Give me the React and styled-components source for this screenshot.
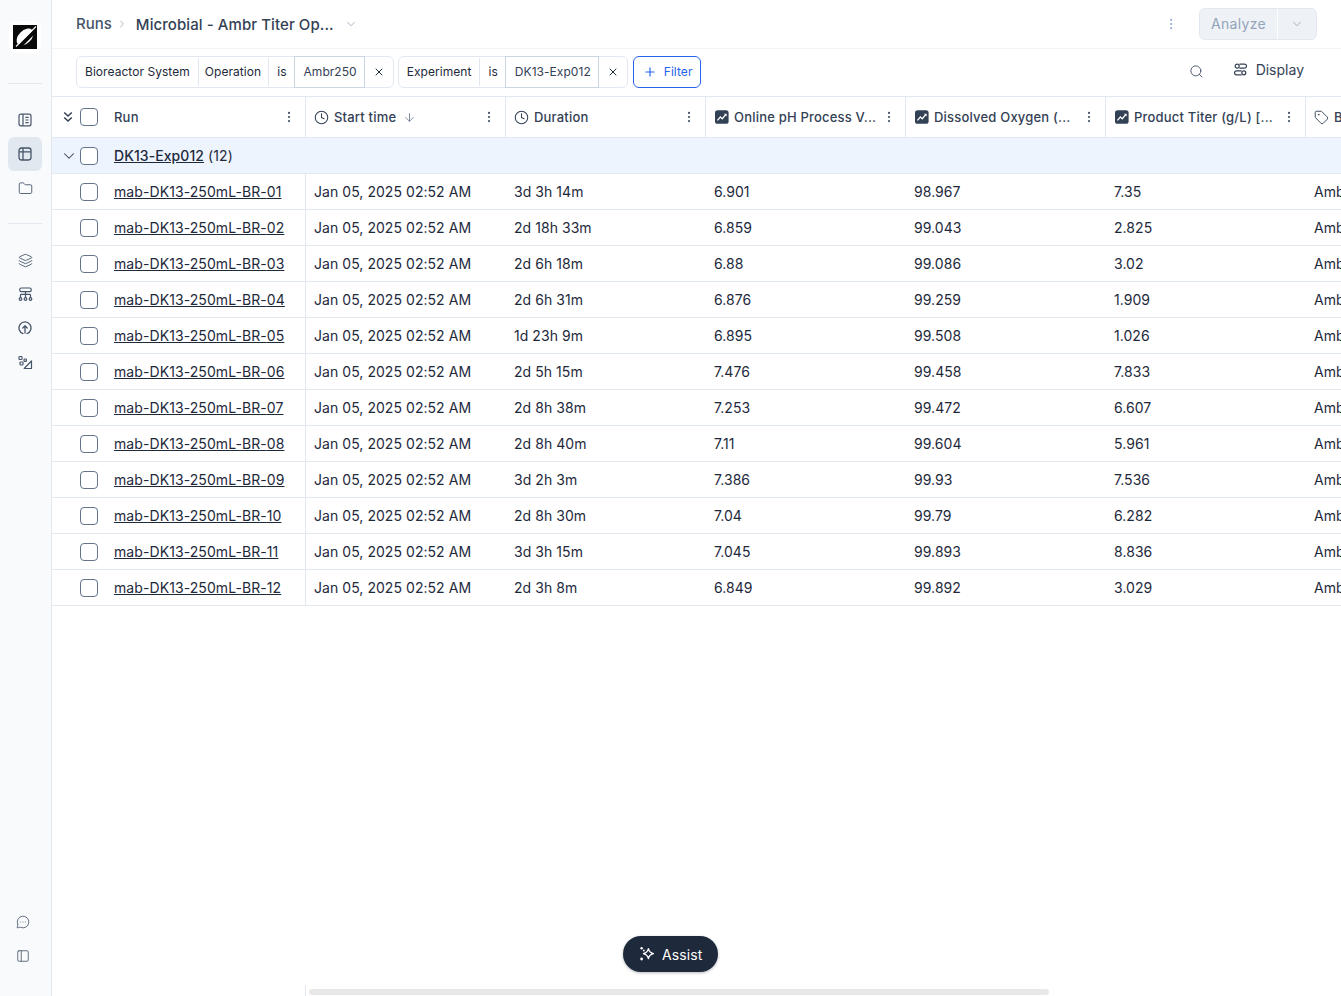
import React from "react";
import styled, { createGlobalStyle } from "styled-components";
import {
  ArrowDown,
  ChevronDown,
  ChevronRight,
  Clock,
  EllipsisVertical,
  Folder,
  Layers,
  MessageCircleMore,
  PanelLeft,
  Plus,
  Search,
  Tag,
  X,
} from "lucide-react";

const RUNS = [
  ["01", "3d 3h 14m", "6.901", "98.967", "7.35"],
  ["02", "2d 18h 33m", "6.859", "99.043", "2.825"],
  ["03", "2d 6h 18m", "6.88", "99.086", "3.02"],
  ["04", "2d 6h 31m", "6.876", "99.259", "1.909"],
  ["05", "1d 23h 9m", "6.895", "99.508", "1.026"],
  ["06", "2d 5h 15m", "7.476", "99.458", "7.833"],
  ["07", "2d 8h 38m", "7.253", "99.472", "6.607"],
  ["08", "2d 8h 40m", "7.11", "99.604", "5.961"],
  ["09", "3d 2h 3m", "7.386", "99.93", "7.536"],
  ["10", "2d 8h 30m", "7.04", "99.79", "6.282"],
  ["11", "3d 3h 15m", "7.045", "99.893", "8.836"],
  ["12", "2d 3h 8m", "6.849", "99.892", "3.029"],
];

const Logo = () => (
  <svg width="24" height="24" viewBox="0 0 24 24">
    <path d="M0 0h24v24H0z" fill="#0a0a0a" />
    <ellipse cx="12" cy="12" rx="10" ry="6.4" transform="rotate(-45 12 12)" fill="#fff" />
    <path d="M25 3 4 24" stroke="#0a0a0a" strokeWidth="4" />
    <path d="M23 1.500 3 21.500" stroke="#fff" strokeWidth="1.100" />
  </svg>
);

const NotebookIcon = () => (
  <svg width="14" height="14" viewBox="0 0 14 14" fill="none" stroke="currentColor" strokeWidth="1.2">
    <rect x="1" y="1.2" width="12" height="11.6" rx="2" />
    <path d="M5 1.2v11.6M7.4 4.4h3.2M7.4 7h3.2M7.4 9.6h3.2" />
  </svg>
);

const TableIcon = () => (
  <svg width="14" height="14" viewBox="0 0 14 14" fill="none" stroke="currentColor" strokeWidth="1.3">
    <rect x="1" y="1" width="12" height="12" rx="2.4" />
    <path d="M1 4.8h12M5 1v12" />
  </svg>
);

const TreeIcon = () => (
  <svg width="15" height="15" viewBox="0 0 15 15" fill="none" stroke="currentColor" strokeWidth="1.2">
    <rect x="1.8" y="1" width="11.4" height="3.6" rx="1.4" />
    <path d="M7.5 4.6v6M2.5 10.6V8.2a.8.8 0 0 1 .8-.8h8.4a.8.8 0 0 1 .8.8v2.4" />
    <circle cx="2.5" cy="12" r="1.3" />
    <circle cx="7.5" cy="12" r="1.3" />
    <circle cx="12.5" cy="12" r="1.3" />
  </svg>
);

const UploadIcon = () => (
  <svg width="14" height="14" viewBox="0 0 14 14" fill="none" stroke="currentColor" strokeWidth="1.3">
    <path d="M5 12.6A6 6 0 1 1 9 12.6" strokeLinecap="round" />
    <path d="M7 12V5M4.8 7 7 4.8 9.2 7" strokeLinecap="round" strokeLinejoin="round" />
  </svg>
);

const ShapesIcon = () => (
  <svg width="15" height="15" viewBox="0 0 15 15" fill="none" stroke="currentColor" strokeWidth="1.2">
    <rect x="1" y="1.5" width="3" height="3" rx="0.8" />
    <rect x="2" y="7" width="3" height="3" rx="0.8" />
    <rect x="6" y="4" width="2.4" height="2.4" rx="0.7" />
    <path d="M13.5 6v7.5H6.2z" strokeLinejoin="round" />
  </svg>
);

const ChartIcon = () => (
  <svg width="15" height="14" viewBox="-1 0 15 14">
    <rect x="0" y="0.2" width="13.6" height="13.6" rx="2.6" fill="#334155" />
    <path d="M2.4 10.4 5.4 7l1.9 1.7 3.6-4.4" fill="none" stroke="#fff" strokeWidth="1.3" />
    <path d="M8.8 3.8h2.8v2.8z" fill="#fff" />
  </svg>
);

const SparkIcon = () => (
  <svg width="16" height="16" viewBox="0 0 16 16" fill="none" stroke="#fff" strokeWidth="1.3">
    <path d="M9.400 2.600c.6 3 1.800 4.200 5 5-3.200.8-4.400 2-5 5-.6-3-1.800-4.200-5-5 3.200-.8 4.400-2 5-5z" strokeLinejoin="round" />
    <circle cx="2.600" cy="2.300" r="1.200" fill="#fff" stroke="none" />
    <circle cx="4.800" cy="4.500" r="0.900" fill="#fff" stroke="none" />
    <circle cx="2.600" cy="13" r="1.400" fill="#fff" stroke="none" />
  </svg>
);

const DoubleChevron = () => (
  <svg width="10" height="12" viewBox="0 0 10 12" fill="none" stroke="currentColor" strokeWidth="1.5">
    <path d="M1.200 1.500 5 5l3.800-3.500M1.200 6.500 5 10l3.800-3.500" />
  </svg>
);

const DisplayIcon = () => (
  <svg width="13" height="13" viewBox="0 0 13 13" fill="none" stroke="currentColor" strokeWidth="1.2">
    <path d="M5.400 1.200h5.100a2 2 0 0 1 0 4H5.400" />
    <circle cx="3.200" cy="3.200" r="2" />
    <path d="M7.600 7.800H2.500a2 2 0 0 0 0 4h5.100" />
    <circle cx="9.800" cy="9.800" r="2" />
  </svg>
);

const App = () => (
  <>
    <GlobalStyle />
    <Shell>
      <Sidebar>
        <LogoBox>
          <Logo />
        </LogoBox>
        <NavRule />
        <NavGroup>
          <NavItem><NotebookIcon /></NavItem>
          <NavItem $active><TableIcon /></NavItem>
          <NavItem><Folder size={15} strokeWidth={1.4} /></NavItem>
        </NavGroup>
        <NavRule $second />
        <NavGroup>
          <NavItem><Layers size={15} strokeWidth={1.4} /></NavItem>
          <NavItem><TreeIcon /></NavItem>
          <NavItem><UploadIcon /></NavItem>
          <NavItem><ShapesIcon /></NavItem>
        </NavGroup>
        <NavFoot>
          <NavItem><MessageCircleMore size={14} strokeWidth={1.4} /></NavItem>
          <NavItem><PanelLeft size={14} strokeWidth={1.4} /></NavItem>
        </NavFoot>
      </Sidebar>

      <Main>
        <TopBar>
          <Crumb>Runs</Crumb>
          <CrumbSep><ChevronRight size={12} strokeWidth={1.5} /></CrumbSep>
          <Title>Microbial - Ambr Titer Op...</Title>
          <TitleCaret><ChevronDown size={14} strokeWidth={1.4} /></TitleCaret>
          <TopActions>
            <MoreDots><EllipsisVertical size={14} strokeWidth={1.5} /></MoreDots>
            <AnalyzeButton>
              <AnalyzeLabel>Analyze</AnalyzeLabel>
              <AnalyzeCaret><ChevronDown size={14} strokeWidth={1.4} /></AnalyzeCaret>
            </AnalyzeButton>
          </TopActions>
        </TopBar>

        <FilterBar>
          <FilterChip>
            <ChipPart>Bioreactor System</ChipPart>
            <ChipPart>Operation</ChipPart>
            <ChipPart $last>is</ChipPart>
            <ChipValue>Ambr250</ChipValue>
            <ChipClose><X size={12} strokeWidth={2} /></ChipClose>
          </FilterChip>
          <FilterChip>
            <ChipPart>Experiment</ChipPart>
            <ChipPart $last>is</ChipPart>
            <ChipValue>DK13-Exp012</ChipValue>
            <ChipClose><X size={12} strokeWidth={2} /></ChipClose>
          </FilterChip>
          <AddFilter>
            <Plus size={14} strokeWidth={2} />
            <FilterLabel>Filter</FilterLabel>
          </AddFilter>
          <FilterTools>
            <SearchButton><Search size={15} strokeWidth={1.5} /></SearchButton>
            <DisplayButton>
              <DisplayIcon />
              Display
            </DisplayButton>
          </FilterTools>
        </FilterBar>

        <TableArea>
          <HeadRow>
            <RunHead>
              <Toggle><DoubleChevron /></Toggle>
              <CheckBox />
              <HeadLabel>Run</HeadLabel>
              <HeadMenu><EllipsisVertical size={14} strokeWidth={1.8} /></HeadMenu>
            </RunHead>
            <HeadCell>
              <Clock size={15} strokeWidth={1.7} />
              <HeadLabel>Start time</HeadLabel>
              <SortMark><ArrowDown size={13} strokeWidth={1.5} /></SortMark>
              <HeadMenu><EllipsisVertical size={14} strokeWidth={1.8} /></HeadMenu>
            </HeadCell>
            <HeadCell>
              <Clock size={15} strokeWidth={1.7} />
              <HeadLabel>Duration</HeadLabel>
              <HeadMenu><EllipsisVertical size={14} strokeWidth={1.8} /></HeadMenu>
            </HeadCell>
            <HeadCell>
              <ChartIcon />
              <HeadLabel>Online pH Process V...</HeadLabel>
              <HeadMenu><EllipsisVertical size={14} strokeWidth={1.8} /></HeadMenu>
            </HeadCell>
            <HeadCell>
              <ChartIcon />
              <HeadLabel>Dissolved Oxygen (...</HeadLabel>
              <HeadMenu><EllipsisVertical size={14} strokeWidth={1.8} /></HeadMenu>
            </HeadCell>
            <HeadCell>
              <ChartIcon />
              <HeadLabel>Product Titer (g/L) [...</HeadLabel>
              <HeadMenu><EllipsisVertical size={14} strokeWidth={1.8} /></HeadMenu>
            </HeadCell>
            <HeadCell>
              <Tag size={15} strokeWidth={1.5} />
              <HeadLabel>Bioreactor System</HeadLabel>
            </HeadCell>
          </HeadRow>

          <GroupRow>
            <GroupToggle><ChevronDown size={18} strokeWidth={1.4} /></GroupToggle>
            <CheckBox />
            <GroupName>DK13-Exp012</GroupName>
            <GroupCount>(12)</GroupCount>
          </GroupRow>

          {RUNS.map(([num, duration, ph, oxygen, titer]) => (
            <DataRow key={num}>
              <RunCell>
                <CheckBox />
                <RunLink>mab-DK13-250mL-BR-{num}</RunLink>
              </RunCell>
              <Cell>Jan 05, 2025 02:52 AM</Cell>
              <Cell>{duration}</Cell>
              <Cell>{ph}</Cell>
              <Cell>{oxygen}</Cell>
              <Cell>{titer}</Cell>
              <Cell>Ambr250</Cell>
            </DataRow>
          ))}

          <ScrollLine />
          <ScrollThumb />
        </TableArea>

        <AssistButton>
          <SparkIcon />
          Assist
        </AssistButton>
      </Main>
    </Shell>
  </>
);

const GlobalStyle = createGlobalStyle`
  html, body {
    margin: 0;
    height: 100%;
    background: #fff;
    overflow: hidden;
  }
  body {
    font-family: Inter, "Liberation Sans", sans-serif;
    font-size: 14px;
    color: #1e293b;
  }
  * {
    box-sizing: border-box;
  }
`;

const COLUMNS = "254px repeat(6, 200px)";

const Shell = styled.div`
  display: flex;
  height: 100vh;
`;

const Sidebar = styled.aside`
  flex: 0 0 52px;
  display: flex;
  flex-direction: column;
  align-items: center;
  padding: 21px 1px 23px 0;
  background: #f8fafc;
  border-right: 1px solid #e2e8f0;
  color: #475569;
`;

const LogoBox = styled.div`
  width: 32px;
  height: 32px;
  flex: none;
  display: flex;
  align-items: center;
  justify-content: center;
  background: #fff;
  border-radius: 6px;
`;

const NavRule = styled.div`
  width: 34px;
  height: 1px;
  flex: none;
  background: #e2e8f0;
  margin: ${(p) => (p.$second ? "18px 0 19px" : "30px 0 19px")};
`;

const NavGroup = styled.div`
  display: flex;
  flex-direction: column;
`;

const NavFoot = styled(NavGroup)`
  margin-top: auto;
  margin-right: 5px;
`;

const NavItem = styled.div`
  width: 34px;
  height: 34px;
  display: flex;
  align-items: center;
  justify-content: center;
  border-radius: 6px;
  background: ${(p) => (p.$active ? "#e2e8f0" : "transparent")};
`;

const Main = styled.main`
  flex: 1;
  min-width: 0;
  display: flex;
  flex-direction: column;
  position: relative;
`;

const TopBar = styled.header`
  flex: 0 0 49px;
  display: flex;
  align-items: center;
  padding: 0 24px;
  border-bottom: 1px solid #f1f5f9;
`;

const Crumb = styled.span`
  font-size: 15px;
  font-weight: 500;
  color: #475569;
  margin-bottom: 2px;
`;

const CrumbSep = styled.span`
  display: flex;
  margin: 0 8px 0 4px;
  color: #94a3b8;
`;

const Title = styled.span`
  font-size: 15px;
  font-weight: 500;
  letter-spacing: 0.08px;
  color: #334155;
`;

const TitleCaret = styled.span`
  display: flex;
  margin-left: 10px;
  color: #94a3b8;
`;

const TopActions = styled.div`
  margin-left: auto;
  display: flex;
  align-items: center;
  gap: 21px;
`;

const MoreDots = styled.span`
  display: flex;
  color: #7c9bdc;
`;

const AnalyzeButton = styled.div`
  width: 118px;
  height: 32px;
  display: flex;
  align-items: stretch;
  background: #eef2f7;
  border: 1px solid #e2e8f0;
  border-radius: 6px;
  color: #94a3b8;
`;

const AnalyzeLabel = styled.span`
  width: 78px;
  display: flex;
  align-items: center;
  justify-content: center;
  padding-bottom: 1px;
  letter-spacing: 0.3px;
  border-right: 1px solid #fff;
`;

const AnalyzeCaret = styled.span`
  flex: 1;
  display: flex;
  align-items: center;
  justify-content: center;
`;

const FilterBar = styled.div`
  flex: 0 0 48px;
  display: flex;
  align-items: center;
  gap: 4px;
  padding: 0 24px 1px;
  border-bottom: 1px solid #e2e8f0;
`;

const FilterChip = styled.div`
  height: 32px;
  display: flex;
  align-items: stretch;
  border: 1px solid #e2e8f0;
  border-radius: 6px;
  font-size: 12px;
  letter-spacing: 0.05px;
  color: #1e293b;
`;

const ChipPart = styled.span`
  position: relative;
  display: flex;
  align-items: center;
  padding: 0 ${(p) => (p.$last ? "7px" : "8px")} 1px ${(p) => (p.$last ? "8px" : "6px")};
  &:first-child {
    padding: 0 9px 1px 8px;
  }
  ${(p) =>
    !p.$last &&
    `&::after {
      content: "";
      position: absolute;
      right: 0;
      top: 1px;
      bottom: 1px;
      width: 1px;
      background: #e2e8f0;
    }`}
`;

const ChipValue = styled.span`
  display: flex;
  align-items: center;
  padding: 0 7px 1px 9px;
  border: 1px solid #cbd5e1;
  margin: -1px 0;
  color: #334155;
`;

const ChipClose = styled.span`
  width: 28px;
  display: flex;
  align-items: center;
  justify-content: center;
  color: #1e293b;
`;

const AddFilter = styled.button`
  height: 32px;
  margin-left: 1px;
  display: flex;
  align-items: center;
  gap: 7px;
  padding: 0 8px 0 9px;
  background: #fff;
  border: 1px solid #2563eb;
  border-radius: 6px;
  font: inherit;
  font-size: 12px;
  letter-spacing: 0.05px;
  color: #2563eb;
`;

const FilterLabel = styled.span`
  margin-bottom: 1px;
`;

const FilterTools = styled.div`
  margin-left: auto;
  margin-bottom: 2px;
  display: flex;
  align-items: center;
  gap: 30px;
  padding-right: 13px;
`;

const SearchButton = styled.span`
  display: flex;
  color: #475569;
`;

const DisplayButton = styled.span`
  display: flex;
  align-items: center;
  gap: 9px;
  margin-bottom: 3px;
  color: #334155;
  font-size: 14px;
`;

const TableArea = styled.div`
  flex: 1;
  min-height: 0;
  position: relative;
  overflow: hidden;
`;

const HeadRow = styled.div`
  display: grid;
  grid-template-columns: ${COLUMNS};
  width: max-content;
  height: 41px;
  border-bottom: 1px solid #e2e8f0;
`;

const HeadCell = styled.div`
  display: flex;
  align-items: center;
  gap: 5px;
  padding: 0 8px;
  border-right: 1px solid #e2e8f0;
  color: #334155;
  &:last-child {
    border-right: 0;
  }
`;

const RunHead = styled(HeadCell)`
  gap: 0;
`;

const HeadLabel = styled.span`
  font-size: 13px;
  font-weight: 500;
  letter-spacing: 0.2px;
  white-space: nowrap;
`;

const HeadMenu = styled.span`
  display: flex;
  margin-left: auto;
  margin-right: 1px;
  color: #475569;
`;

const SortMark = styled.span`
  display: flex;
  margin-left: 2px;
  color: #64748b;
`;

const Toggle = styled.span`
  display: flex;
  width: 20px;
  justify-content: center;
  margin-left: -2px;
  color: #334155;
`;

const GroupToggle = styled(Toggle)`
  padding-left: 2px;
`;

const CheckBox = styled.span`
  flex: none;
  width: 18px;
  height: 18px;
  margin: 0 16px 0 2px;
  background: #fff;
  border: 1px solid #64748b;
  border-radius: 4px;
`;

const GroupRow = styled.div`
  height: 36px;
  display: flex;
  align-items: center;
  padding-left: 8px;
  background: #edf4fd;
  border-bottom: 1px solid #e2e8f0;
  letter-spacing: 0.08px;
`;

const GroupName = styled.a`
  font-weight: 500;
  text-decoration: underline;
  color: #1e293b;
`;

const GroupCount = styled.span`
  margin-left: 4px;
  color: #1e293b;
`;

const DataRow = styled.div`
  display: grid;
  grid-template-columns: ${COLUMNS};
  width: max-content;
  height: 36px;
  border-bottom: 1px solid #e2e8f0;
`;

const Cell = styled.div`
  display: flex;
  align-items: center;
  padding: 0 8px;
  letter-spacing: 0.05px;
  white-space: nowrap;
  color: #1e293b;
`;

const RunCell = styled(Cell)`
  padding-left: 26px;
  border-right: 1px solid #e2e8f0;
`;

const RunLink = styled.a`
  letter-spacing: 0.08px;
  text-decoration: underline;
  color: #1e293b;
`;

const ScrollLine = styled.div`
  position: absolute;
  left: 253px;
  bottom: 0;
  width: 1px;
  height: 11px;
  background: #e2e8f0;
`;

const ScrollThumb = styled.div`
  position: absolute;
  left: 257px;
  bottom: 1px;
  width: 740px;
  height: 6px;
  border-radius: 3px;
  background: #e8e8e8;
`;

const AssistButton = styled.button`
  position: absolute;
  left: 571px;
  bottom: 24px;
  height: 36px;
  display: flex;
  align-items: center;
  gap: 7px;
  padding: 0 16px;
  background: #1e293b;
  border: 0;
  border-radius: 18px;
  box-shadow: 0 1px 3px rgba(15, 23, 42, 0.3);
  font: inherit;
  letter-spacing: 0.1px;
  color: #fff;
`;

export default App;
